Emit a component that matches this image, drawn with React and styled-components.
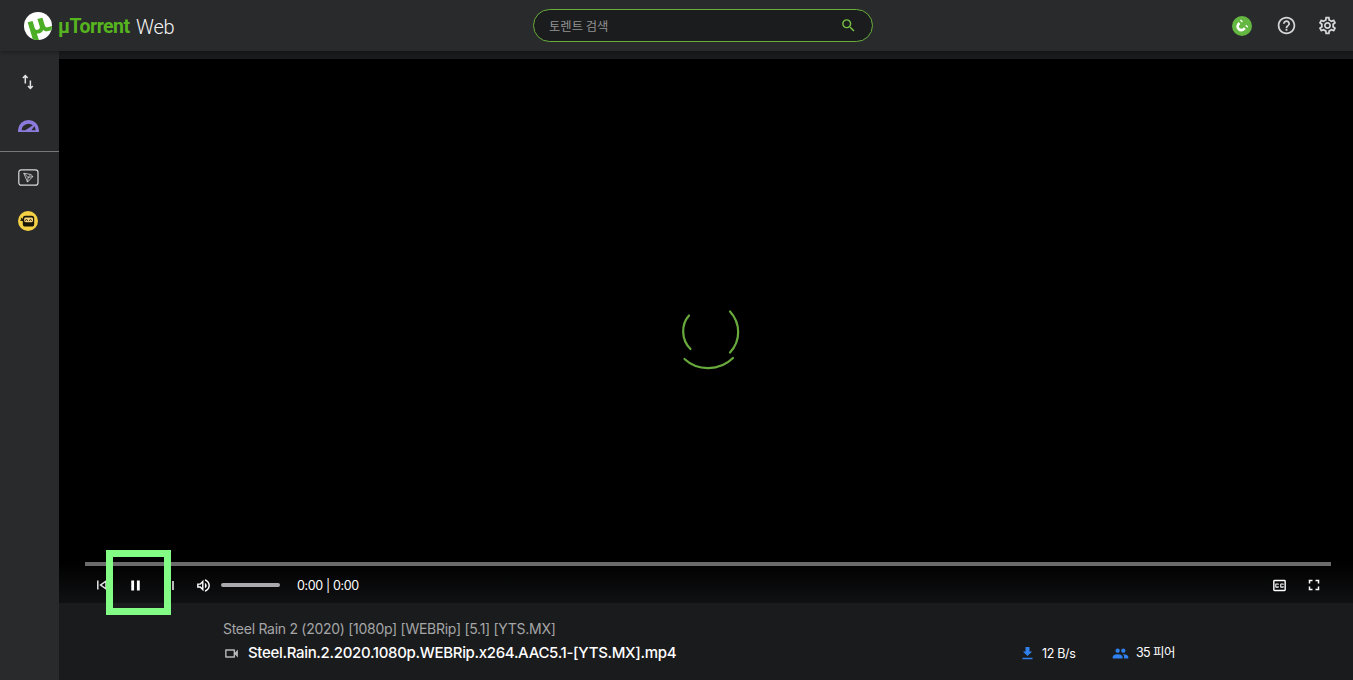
import React from "react";
import styled, { createGlobalStyle } from "styled-components";
import {
  MdSearch, MdHelpOutline, MdOutlineSettings, MdPause, MdOutlineVolumeUp,
  MdOutlineClosedCaption, MdFullscreen, MdOutlineVideocam, MdPeople,
} from "react-icons/md";

const Global = createGlobalStyle`
  * { box-sizing: border-box; }
  body {
    margin: 0;
    background: #1a1b1d;
    overflow: hidden;
    font-family: Inter, "Noto Sans CJK KR", sans-serif;
  }
  svg { display: block; flex: none; }
`;

const Page = styled.div`
  display: grid;
  grid-template: 51px 629px / 59px 1fr;
  width: 1353px;
  height: 680px;
  overflow: hidden;
`;

const Header = styled.header`
  grid-column: 1 / 3;
  display: flex;
  align-items: center;
  padding: 0 15px 0 24px;
  background: #292a2c;
  box-shadow: 0 1px 4px rgba(0, 0, 0, 0.35);
  z-index: 1;
`;

const Brand = styled.div`
  display: flex;
  align-items: center;
  width: 509px;
  height: 51px;
`;

const BrandName = styled.span`
  width: 72px;
  margin: 2px 0 0 6px;
  font: 700 19.5px/28px Roboto, sans-serif;
  letter-spacing: -0.5px;
  color: #56b51f;
`;

const BrandSuffix = styled.span`
  margin: 2px 0 0 6px;
  font: 300 20px/28px Roboto, sans-serif;
  letter-spacing: -0.2px;
  color: #f4f4f4;
`;

const SearchBox = styled.div`
  display: flex;
  align-items: center;
  justify-content: space-between;
  width: 340px;
  height: 33px;
  padding: 0 15px;
  border: 1px solid #69ad3b;
  border-radius: 17px;
  background: #1b1c1d;
  color: #76c043;
`;

const Placeholder = styled.span`
  font: 12.3px/18px "Noto Sans CJK KR", sans-serif;
  color: #929292;
`;

const HeaderActions = styled.div`
  display: flex;
  align-items: center;
  margin-left: auto;
  color: #d6d6d6;
`;

const Action = styled.span`
  margin-left: ${(p) => p.$gap || 0}px;
`;

const Sidebar = styled.nav`
  display: flex;
  flex-direction: column;
  background: #292a2c;
`;

const SideGroup = styled.div`
  display: flex;
  flex-direction: column;
  padding-top: ${(p) => p.$top}px;
  height: ${(p) => p.$height}px;
  border-bottom: ${(p) => (p.$divided ? "1px solid #77787a" : "0")};
`;

const SideItem = styled.div`
  display: flex;
  align-items: center;
  justify-content: center;
  width: 56px;
  height: ${(p) => p.$height || 44}px;
`;

const Main = styled.main`
  display: flex;
  flex-direction: column;
  padding-top: 8px;
  background: #1a1b1d;
`;

const Player = styled.section`
  display: flex;
  flex-direction: column;
  height: 544px;
  background: #000;
`;

const Stage = styled.div`
  height: 503px;
  padding: 245px 0 0 621px;
`;

const Controls = styled.div`
  height: 41px;
  padding: 0 22px 0 26px;
  background: linear-gradient(#000, #101113);
`;

const Seek = styled.div`
  height: 4px;
  background: #6b6b6c;
`;

const ControlRow = styled.div`
  display: flex;
  align-items: center;
  height: 38px;
  padding: 0 8px 0 11px;
  color: #fff;
`;

const Previous = styled.span`
  width: 31px;
`;

const PauseButton = styled.div`
  position: relative;
  width: 18px;
  margin-right: 27px;
`;

const Highlight = styled.div`
  position: absolute;
  left: -21px;
  top: -27px;
  width: 65px;
  height: 65px;
  border: 7px solid #83fc86;
`;

const NextBar = styled.span`
  width: 2px;
  height: 9px;
  background: #b9b9b9;
  margin-right: 21px;
`;

const Volume = styled.div`
  width: 59px;
  height: 4px;
  margin: 0 17px 0 9px;
  border-radius: 2px;
  background: #aaa9ad;
`;

const Time = styled.span`
  padding-top: 2px;
  font-size: 12.5px;
  line-height: 18px;
  letter-spacing: -0.35px;
`;

const ControlEnd = styled.div`
  display: flex;
  align-items: center;
  gap: 17px;
  margin-left: auto;
`;

const Info = styled.section`
  display: flex;
  flex-direction: column;
  height: 77px;
  padding: 15px 178px 0 164px;
`;

const TorrentName = styled.div`
  font-size: 14px;
  line-height: 22px;
  letter-spacing: -0.28px;
  color: #a5a6a7;
`;

const FileRow = styled.div`
  display: flex;
  align-items: center;
  height: 26px;
  color: #b8b8b8;
`;

const FileName = styled.span`
  margin-left: 8px;
  font-size: 15px;
  font-weight: 500;
  line-height: 22px;
  letter-spacing: -0.32px;
  white-space: nowrap;
  color: #fff;
`;

const Stats = styled.div`
  display: flex;
  margin-left: auto;
  color: #2f80ed;
`;

const Stat = styled.div`
  display: flex;
  align-items: center;
  width: ${(p) => p.$width}px;
`;

const StatText = styled.span`
  margin-left: ${(p) => p.$gap}px;
  padding-top: ${(p) => p.$drop || 0}px;
  font-size: 12.5px;
  line-height: 18px;
  letter-spacing: ${(p) => p.$tracking || -0.35}px;
  white-space: nowrap;
  color: #fff;
`;

function TorrentLogo() {
  return (
    <svg width="28" height="28" viewBox="0 0 28 28">
      <circle cx="14" cy="14" r="14" fill="#fff" />
      <path d="M3.7 10.2 8.6 9l1.9 6.4c.7 2 1.8 2.8 3.3 2.4 1.7-.4 2.4-1.8 1.9-3.5L13.4 7l5-1.2 2.4 7.8c.5 1.6 1.5 2 2.9 1.6l4.2-1.1c0 1.6-.2 3-.6 4.1l-3.2.8c-1.9.5-3.7.1-4.8-1.3-.9 2.1-2.4 3.4-4.3 3.8-.9.2-1.6.1-2.2 0L14.9 28c-2.4.2-4.4-.2-6.2-1.1Z" fill="#4bae25" />
    </svg>
  );
}

function MagnetBadge() {
  return (
    <svg width="20" height="20" viewBox="0 0 20 20">
      <circle cx="10" cy="10" r="10" fill="#64b741" />
      <path d="M7.5 7C5.2 9.2 5 11.4 6.7 13c1.7 1.6 4 1.4 6.2-.9" fill="none" stroke="#fff" strokeWidth="2.6" />
      <path d="m9 5.5.9-.9M14.3 10.7l.9-.9" stroke="#fff" strokeWidth="2.8" />
    </svg>
  );
}

function Transfers() {
  return (
    <svg width="12" height="16" viewBox="0 0 12 16" fill="none" stroke="#e4e4e4" strokeWidth="1.5">
      <path d="M3.3 9.5V2M.9 4 3.3 1.6 5.7 4M8.4 6.5V14M6 12l2.4 2.4L10.8 12" />
    </svg>
  );
}

function Gauge() {
  return (
    <svg width="21" height="12" viewBox="0 0 21 12">
      <path d="M0 12v-1.7a10.4 10.2 0 0 1 21 0V12Z" fill="#8c7bdc" />
      <path d="M3.6 10.3a7 6.6 0 0 1 11.4-5L7.4 10.3ZM16.3 6.3c.8 1 1.2 2.4 1.3 4h-4.2Z" fill="#292a2c" />
      <path d="M7.2 12 16.2 4.6 12 12Z" fill="#8c7bdc" />
    </svg>
  );
}

function Tron() {
  return (
    <svg width="21" height="17" viewBox="0 0 21 17" fill="none" stroke="#d9d9d9">
      <rect x=".8" y=".8" width="19.2" height="15.4" rx="2.5" strokeWidth="1.2" />
      <path d="m5.8 4.2 7 1.3 2.1 2-5.4 5.6ZM5.8 4.2l4.3 4.3-.6 4.6M10.1 8.5l2.7-3M10.1 8.5l4.8-1" strokeWidth=".8" />
    </svg>
  );
}

function Ninja() {
  return (
    <svg width="20" height="20" viewBox="0 0 20 20">
      <circle cx="10" cy="10" r="10" fill="#f4d044" />
      <rect x="4.8" y="4.8" width="11.4" height="10.8" rx="2.6" fill="#17140a" />
      <path d="m5.5 8.2-2.8-1.6.5 1.9-1.3 1.2 3.6.3" fill="#17140a" />
      <rect x="6.2" y="6.4" width="8.8" height="4.8" rx="1.4" fill="#f4d27a" />
      <path d="M7.4 9.8c.2-1.7 1.9-1.7 2.2 0M11.4 9.8c.2-1.7 1.9-1.7 2.2 0" fill="none" stroke="#17140a" strokeWidth=".9" />
    </svg>
  );
}

function Spinner() {
  return (
    <svg width="60" height="70" viewBox="0 0 60 70" fill="none" stroke="#69aa3d" strokeWidth="2.2" strokeLinecap="round">
      <path d="M9 11.5C1 20.5 1 35.7 10.5 45" />
      <path d="M50 7.5c10.8 11.7 11 29.2 0 41" />
      <path d="M4.5 55C17.5 67.3 39.5 67.3 53 54" />
    </svg>
  );
}

function PreviousIcon() {
  return (
    <svg width="12" height="12" viewBox="0 0 12 12" fill="none" stroke="#e4e4e4" strokeWidth="1.5">
      <path d="M1.8 1.5v9M10 2.2v7.6L4.6 6Z" />
    </svg>
  );
}

function DownloadIcon() {
  return (
    <svg width="11" height="13" viewBox="0 0 11 13" fill="#2f80ed">
      <path d="M3.5 0h4v4.4h2.7L5.5 9 .8 4.4h2.7ZM.5 10.7h10v1.5H.5Z" />
    </svg>
  );
}

export default function App() {
  return (
    <Page>
      <Global />
      <Header>
        <Brand>
          <TorrentLogo />
          <BrandName>µTorrent</BrandName>
          <BrandSuffix>Web</BrandSuffix>
        </Brand>
        <SearchBox>
          <Placeholder>토렌트 검색</Placeholder>
          <MdSearch size={17} />
        </SearchBox>
        <HeaderActions>
          <Action><MagnetBadge /></Action>
          <Action $gap={24}><MdHelpOutline size={21} /></Action>
          <Action $gap={20}><MdOutlineSettings size={21} /></Action>
        </HeaderActions>
      </Header>
      <Sidebar>
        <SideGroup $top={9} $height={101} $divided>
          <SideItem $height={44}><Transfers /></SideItem>
          <SideItem $height={44}><Gauge /></SideItem>
        </SideGroup>
        <SideGroup $top={4} $height={95}>
          <SideItem $height={43}><Tron /></SideItem>
          <SideItem><Ninja /></SideItem>
        </SideGroup>
      </Sidebar>
      <Main>
        <Player>
          <Stage><Spinner /></Stage>
          <Controls>
            <Seek />
            <ControlRow>
              <Previous><PreviousIcon /></Previous>
              <PauseButton>
                <MdPause size={17} />
                <Highlight />
              </PauseButton>
              <NextBar />
              <MdOutlineVolumeUp size={17} />
              <Volume />
              <Time>0:00 | 0:00</Time>
              <ControlEnd>
                <MdOutlineClosedCaption size={17} />
                <MdFullscreen size={18} />
              </ControlEnd>
            </ControlRow>
          </Controls>
        </Player>
        <Info>
          <TorrentName>Steel Rain 2 (2020) [1080p] [WEBRip] [5.1] [YTS.MX]</TorrentName>
          <FileRow>
            <MdOutlineVideocam size={17} />
            <FileName>Steel.Rain.2.2020.1080p.WEBRip.x264.AAC5.1-[YTS.MX].mp4</FileName>
            <Stats>
              <Stat $width={90}><DownloadIcon /><StatText $gap={9} $drop={2}>12 B/s</StatText></Stat>
              <Stat $width={63}><MdPeople size={17} /><StatText $gap={7} $tracking={-0.6}>35 피어</StatText></Stat>
            </Stats>
          </FileRow>
        </Info>
      </Main>
    </Page>
  );
}
